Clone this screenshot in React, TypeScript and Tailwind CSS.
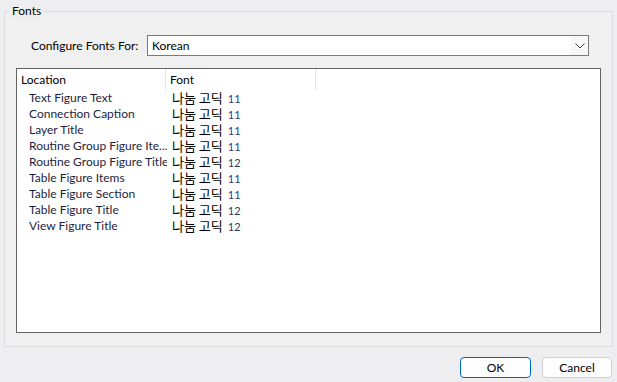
const rows = [
  { location: "Text Figure Text", size: 11 },
  { location: "Connection Caption", size: 11 },
  { location: "Layer Title", size: 11 },
  { location: "Routine Group Figure Ite...", size: 11 },
  { location: "Routine Group Figure Title", size: 12 },
  { location: "Table Figure Items", size: 11 },
  { location: "Table Figure Section", size: 11 },
  { location: "Table Figure Title", size: 12 },
  { location: "View Figure Title", size: 12 },
];

export default function App() {
  return (
    <div className="w-[617px] h-[382px] bg-[#eeeef0] text-[12px] leading-[16px] text-black font-['Lato','Noto_Sans_CJK_KR',sans-serif] overflow-hidden">
      {/* GROUP BOX */}
      <div className="relative ml-[4px] mt-[11px] w-[609px] h-[336px] border border-[#dcdcdc] bg-[#f0f0f0]">
        <div className="absolute left-[4px] top-[-9px] px-[3px] h-[16px] bg-[#eeeef0]">Fonts</div>

        {/* Configure row */}
        <div className="flex items-center mt-[23px] h-[21px]">
          <div className="w-[142px] pl-[26px] whitespace-nowrap">Configure Fonts For:</div>
          <div className="flex items-center w-[442px] h-[21px] border border-[#7a7a7a] bg-white">
            <div className="flex-1 pl-[4px]">Korean</div>
            <div className="flex items-center justify-center w-[17px] h-full bg-[#f7f7f7]">
              <svg width="10" height="6" viewBox="0 0 10 6">
                <polyline points="0.5,0.5 5,5 9.5,0.5" fill="none" stroke="#444" strokeWidth="1" />
              </svg>
            </div>
          </div>
        </div>

        {/* List */}
        <div className="ml-[11px] mt-[12px] w-[585px] h-[265px] border border-[#646464] bg-white">
          <div className="flex h-[21px]">
            <div className="w-[149px] pl-[4px] pt-[3px] border-r border-[#e5e5e5]">Location</div>
            <div className="w-[150px] pl-[4px] pt-[3px] border-r border-[#e5e5e5]">Font</div>
          </div>
          {rows.map((r) => (
            <div key={r.location} className="flex items-center h-[16px]">
              <div className="w-[150px] pl-[12px] whitespace-nowrap overflow-hidden text-[#1e1e3c]">
                {r.location}
              </div>
              <div className="pl-[5px] flex items-baseline whitespace-nowrap h-[16px]">
                <span className="inline-block h-[16px] text-[13px] leading-[16px] text-black font-['Noto_Sans_CJK_KR',sans-serif]">나눔 고딕</span>
                <span className="ml-[5px] text-[11px] leading-[16px] text-[#1f3a70]">{r.size}</span>
              </div>
            </div>
          ))}
        </div>
      </div>

      {/* BUTTONS */}
      <div className="flex justify-end gap-[11px] pr-[5px] mt-[10px]">
        <button className="w-[71px] h-[21px] rounded-[4px] border border-[#0067c0] bg-[#fdfdfd]">OK</button>
        <button className="w-[70px] h-[21px] rounded-[4px] border border-[#d0d0d0] bg-[#fdfdfd]">Cancel</button>
      </div>
    </div>
  );
}
